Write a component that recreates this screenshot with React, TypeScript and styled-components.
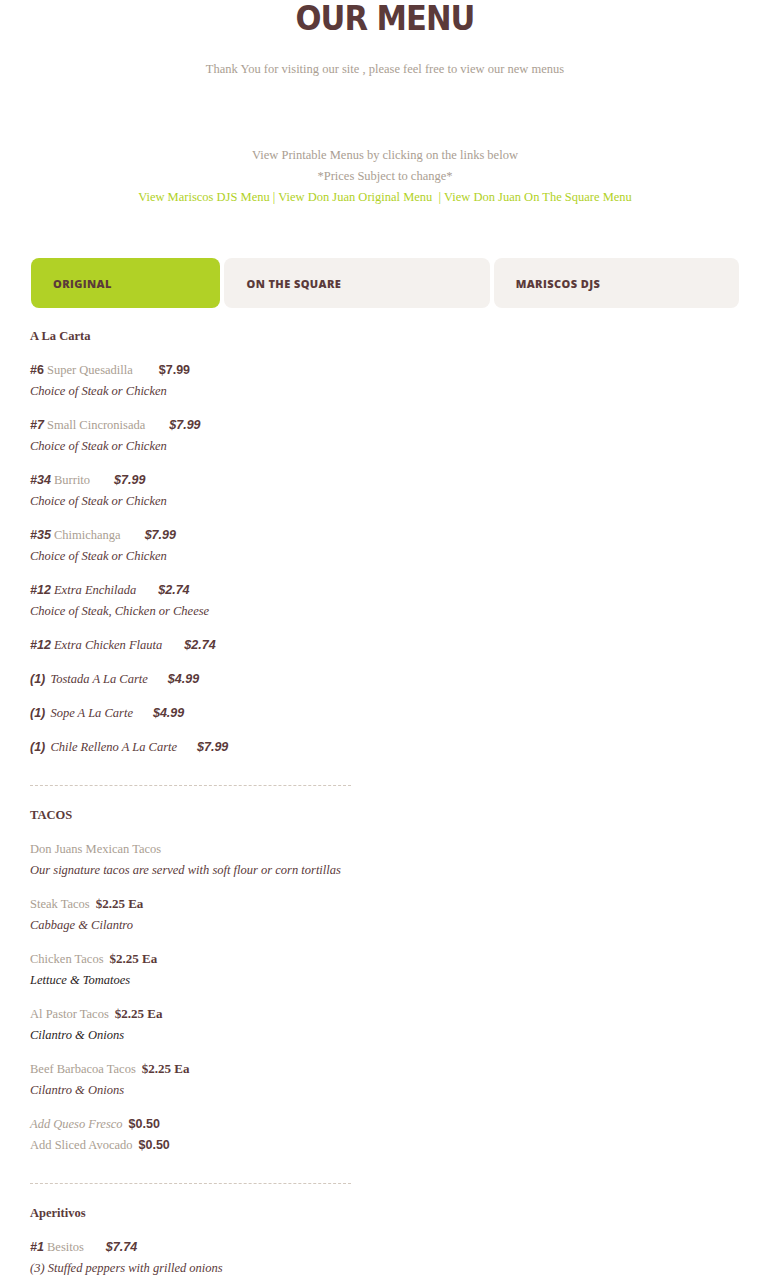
import React from "react";
import styled, { createGlobalStyle } from "styled-components";

const Global = createGlobalStyle`
  html, body { margin: 0; padding: 0; background: #fff; }
  body { font-family: "Liberation Serif", serif; }
`;

const DARK = "#5b3a3a";
const LIGHT = "#aa9e92";
const GREEN = "#b1d126";

const Page = styled.div`
  width: 770px;
  box-sizing: border-box;
  padding: 0 30px;
  overflow: hidden;
`;

const Title = styled.h1`
  margin: 0;
  text-align: center;
  font-family: "DejaVu Sans Condensed", "DejaVu Sans", sans-serif;
  font-stretch: condensed;
  font-weight: bold;
  font-size: 34px;
  line-height: 36px;
  letter-spacing: -1px;
  color: ${DARK};
`;

const Intro = styled.p`
  margin: 23px 0 0;
  text-align: center;
  font-size: 12.5px;
  line-height: 21px;
  color: ${LIGHT};
`;

const Notes = styled.div`
  margin-top: 65px;
  text-align: center;
  font-size: 12.5px;
  line-height: 21px;
  color: ${LIGHT};
`;

const Links = styled.div`
  color: ${GREEN};
`;

const Link = styled.a`
  color: ${GREEN};
  text-decoration: none;
`;

const Tabs = styled.div`
  display: flex;
  gap: 4px;
  margin: 50px 1px 0 1px;
`;

const Tab = styled.div<{ $active?: boolean; $w: number }>`
  width: ${(p) => p.$w}px;
  height: 50px;
  box-sizing: border-box;
  border-radius: 8px;
  background: ${(p) => (p.$active ? GREEN : "#f4f1ee")};
  display: flex;
  align-items: center;
  padding-left: 22px;
  font-family: "Open Sans", sans-serif;
  font-weight: 800;
  font-size: 11px;
  letter-spacing: 0.4px;
  color: ${DARK};
`;

const Content = styled.div`
  margin-top: 18px;
  font-size: 12.5px;
  line-height: 21px;
`;

const P = styled.p`
  margin: 0 0 13px;
  color: ${DARK};
`;

const Heading = styled.span`
  font-weight: bold;
  color: ${DARK};
`;

const Num = styled.span<{ $italic?: boolean }>`
  font-family: "Liberation Sans", sans-serif;
  font-size: 12.5px;
  line-height: 1;
  font-weight: bold;
  font-style: ${(p) => (p.$italic ? "italic" : "normal")};
  color: ${DARK};
`;

const Name = styled.span<{ $italic?: boolean; $dark?: boolean; $pad?: number }>`
  margin-left: ${(p) => p.$pad ?? 0}px;
  color: ${(p) => (p.$dark ? DARK : LIGHT)};
  font-style: ${(p) => (p.$italic ? "italic" : "normal")};
`;

const Price = styled.span<{ $gap: number; $italic?: boolean; $serif?: boolean }>`
  margin-left: ${(p) => p.$gap}px;
  font-family: ${(p) => (p.$serif ? '"Liberation Serif", serif' : '"Liberation Sans", sans-serif')};
  font-size: ${(p) => (p.$serif ? "13px" : "12.5px")};
  line-height: 1;
  font-weight: bold;
  font-style: ${(p) => (p.$italic ? "italic" : "normal")};
  color: ${DARK};
`;

const Desc = styled.span<{ $black?: boolean }>`
  font-style: italic;
  color: ${(p) => (p.$black ? "#2a1c1c" : DARK)};
`;

const Divider = styled.div`
  width: 321px;
  height: 21px;
  margin-bottom: 13px;
  box-sizing: border-box;
  border-bottom: 1px dashed #d3c9bf;
  transform: translateY(-6px);
`;

type Item = { num: string; name: string; gap: number; desc?: string; nameDark?: boolean; paren?: boolean };

const alaCarta: Item[] = [
  { num: "#6", name: "Super Quesadilla", gap: 26, desc: "Choice of Steak or Chicken" },
  { num: "#7", name: "Small Cincronisada", gap: 24, desc: "Choice of Steak or Chicken" },
  { num: "#34", name: "Burrito", gap: 24, desc: "Choice of Steak or Chicken" },
  { num: "#35", name: "Chimichanga", gap: 24, desc: "Choice of Steak or Chicken" },
  { num: "#12", name: "Extra Enchilada", gap: 22, desc: "Choice of Steak, Chicken or Cheese", nameDark: true },
  { num: "#12", name: "Extra Chicken Flauta", gap: 22, nameDark: true },
  { num: "(1)", name: "Tostada A La Carte", gap: 20, nameDark: true, paren: true },
  { num: "(1)", name: "Sope A La Carte", gap: 20, nameDark: true, paren: true },
  { num: "(1)", name: "Chile Relleno A La Carte", gap: 20, nameDark: true, paren: true },
];

const prices = ["$7.99", "$7.99", "$7.99", "$7.99", "$2.74", "$2.74", "$4.99", "$4.99", "$7.99"];

const tacos = [
  { name: "Steak Tacos", desc: "Cabbage & Cilantro", black: false },
  { name: "Chicken Tacos", desc: "Lettuce & Tomatoes", black: true },
  { name: "Al Pastor Tacos", desc: "Cilantro & Onions", black: true },
  { name: "Beef Barbacoa Tacos", desc: "Cilantro & Onions", black: false },
];

export default function App() {
  return (
    <Page>
      <Global />
      <Title>OUR MENU</Title>
      <Intro>Thank You for visiting our site , please feel free to view our new menus</Intro>
      <Notes>
        <div>View Printable Menus by clicking on the links below</div>
        <div>*Prices Subject to change*</div>
        <Links>
          <Link href="#">View Mariscos DJS Menu</Link> | <Link href="#">View Don Juan Original Menu</Link>
          {"\u00a0 | "}
          <Link href="#">View Don Juan On The Square Menu</Link>
        </Links>
      </Notes>
      <Tabs>
        <Tab $active $w={190}>ORIGINAL</Tab>
        <Tab $w={266}>ON THE SQUARE</Tab>
        <Tab $w={246}>MARISCOS DJS</Tab>
      </Tabs>
      <Content>
        <P>
          <Heading>A La Carta</Heading>
        </P>
        {alaCarta.map((it, i) => (
          <P key={i}>
            <Num $italic={i > 0}>{it.num}</Num>{" "}
            <Name $italic={it.nameDark} $dark={it.nameDark} $pad={it.paren ? 2 : 0}>
              {it.name}
            </Name>
            <Price $gap={it.gap} $italic={i > 0}>{prices[i]}</Price>
            {it.desc && (
              <>
                <br />
                <Desc>{it.desc}</Desc>
              </>
            )}
          </P>
        ))}
        <Divider />
        <P>
          <Heading>TACOS</Heading>
        </P>
        <P>
          <Name>Don Juans Mexican Tacos</Name>
          <br />
          <Desc>Our signature tacos are served with soft flour or corn tortillas</Desc>
        </P>
        {tacos.map((t, i) => (
          <P key={i}>
            <Name>{t.name}</Name>
            <Price $gap={6} $serif>$2.25 Ea</Price>
            <br />
            <Desc $black={t.black}>{t.desc}</Desc>
          </P>
        ))}
        <P>
          <Name $italic>Add Queso Fresco</Name>
          <Price $gap={6}>$0.50</Price>
          <br />
          <Name>Add Sliced Avocado</Name>
          <Price $gap={6}>$0.50</Price>
        </P>
        <Divider />
        <P>
          <Heading>Aperitivos</Heading>
        </P>
        <P>
          <Num $italic>#1</Num> <Name>Besitos</Name>
          <Price $gap={22} $italic>$7.74</Price>
          <br />
          <Desc>(3) Stuffed peppers with grilled onions</Desc>
        </P>
      </Content>
    </Page>
  );
}
